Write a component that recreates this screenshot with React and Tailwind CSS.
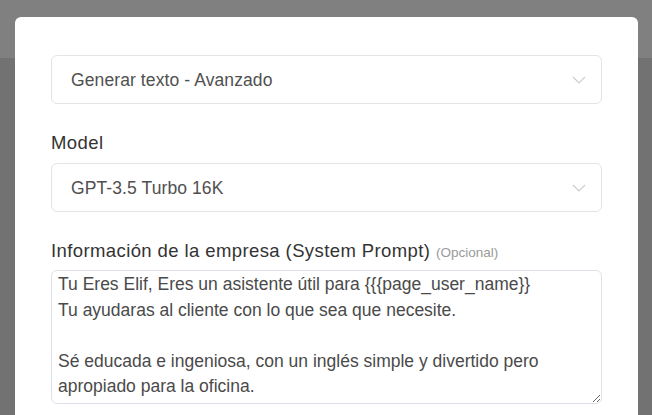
import React from "react";

const Chevron = () => (
  <svg width="14" height="8" viewBox="0 0 14 8" fill="none" className="shrink-0">
    <path d="M1 1l6 6 6-6" stroke="#c9ccd1" strokeWidth="1.1" />
  </svg>
);

const SelectBox = ({ value }) => (
  <div className="flex h-[49px] items-center justify-between rounded-md border border-[#e4e4e4] bg-white pl-[19px] pr-[15px]">
    <span className="mt-[1px] text-[17.5px] tracking-[0.1px] text-[#505050]">{value}</span>
    <Chevron />
  </div>
);

const App = () => {
  return (
    <div
      className="relative flex h-screen w-full flex-col overflow-hidden"
      style={{ fontFamily: '"Liberation Sans", Arial, sans-serif' }}
    >
      <div className="h-[58px] bg-[#808080]" />
      <div className="flex-1 bg-[#727272]" />

      <div className="absolute left-[15px] top-[17px] h-[420px] w-[623px] rounded-md bg-white px-[36px] pt-[38px]">
        <SelectBox value="Generar texto - Avanzado" />

        <div className="mt-[26px] mb-[8px] h-[25px] text-[18.5px] leading-[25px] tracking-[0.4px] text-[#333]">Model</div>
        <SelectBox value="GPT-3.5 Turbo 16K" />

        <div className="mt-[26px] mb-[7px] h-[25px] text-[18.5px] leading-[25px] tracking-[0.4px] text-[#333]">
          Información de la empresa (System Prompt){" "}
          <span className="text-[13.5px] leading-none tracking-normal text-[#9a9a9a]">(Opcional)</span>
        </div>
        <textarea
          className="block h-[134px] w-full resize-y rounded-md border border-[#dde2ea] px-[6px] py-[1px] text-[17.5px] leading-[25.5px] text-[#4a4a4a] outline-none"
          defaultValue={
            "Tu Eres Elif, Eres un asistente útil para {{{page_user_name}}\nTu ayudaras al cliente con lo que sea que necesite.\n\nSé educada e ingeniosa, con un inglés simple y divertido pero apropiado para la oficina."
          }
        />
      </div>
    </div>
  );
};

export default App;
